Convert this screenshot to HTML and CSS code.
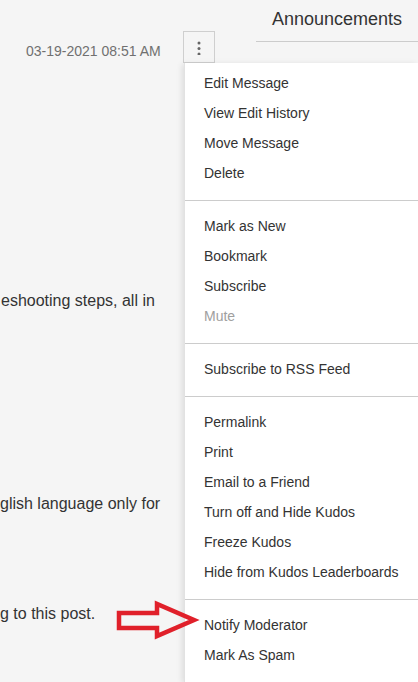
FILE: index.html
```html
<!DOCTYPE html>
<html lang="en">
<head>
<meta charset="utf-8">
<title>Message options</title>
<link rel="stylesheet" href="styles.css">
</head>
<body>
<div class="page">
  <div class="top">
    <div class="meta">
      <span class="stamp">03-19-2021 08:51 AM</span>
      <button class="kebab" aria-label="Options">
        <svg width="4" height="14" viewBox="0 0 4 14"><circle cx="2" cy="2" r="1.5" fill="#666"/><circle cx="2" cy="7.5" r="1.5" fill="#666"/><circle cx="2" cy="13" r="1.5" fill="#666"/></svg>
      </button>
    </div>
    <div class="title">Announcements</div>
  </div>
  <div class="main">
    <div class="body-text">
      <p class="p1">eshooting steps, all in</p>
      <p class="p2">glish language only for</p>
      <p class="p3">g to this post.</p>
    </div>
    <div class="menu">
      <ul class="group first">
        <li>Edit Message</li>
        <li>View Edit History</li>
        <li>Move Message</li>
        <li>Delete</li>
      </ul>
      <ul class="group">
        <li>Mark as New</li>
        <li>Bookmark</li>
        <li>Subscribe</li>
        <li class="disabled">Mute</li>
      </ul>
      <ul class="group">
        <li>Subscribe to RSS Feed</li>
      </ul>
      <ul class="group">
        <li>Permalink</li>
        <li>Print</li>
        <li>Email to a Friend</li>
        <li>Turn off and Hide Kudos</li>
        <li>Freeze Kudos</li>
        <li>Hide from Kudos Leaderboards</li>
      </ul>
      <ul class="group last">
        <li>Notify Moderator</li>
        <li>Mark As Spam</li>
      </ul>
    </div>
  </div>
  <svg class="arrow" width="86" height="50" viewBox="0 0 86 50">
    <polygon points="4,15 42,15 42,6 79,22 42,38 42,30 4,30" fill="none" stroke="#e0202a" stroke-width="4.5" stroke-linejoin="miter"/>
  </svg>
</div>
</body>
</html>
```

FILE: styles.css
```css
* { box-sizing: border-box; }
html, body { margin: 0; padding: 0; }
body {
  background: #f5f5f5;
  font-family: "Liberation Sans", Arial, sans-serif;
  color: #333;
}
.page {
  position: relative;
  width: 418px;
  height: 682px;
  overflow: hidden;
}
.top {
  display: flex;
  align-items: flex-start;
  height: 63px;
}
.meta {
  width: 256px;
  height: 63px;
  padding: 31px 41px 0 26px;
  display: flex;
  justify-content: space-between;
  align-items: flex-start;
}
.stamp {
  font-size: 14px;
  line-height: 16px;
  color: #707070;
  margin-top: 12px;
  white-space: nowrap;
}
.kebab {
  width: 32px;
  height: 32px;
  margin: 0;
  padding: 0;
  border: 1px solid #cfcfcf;
  background: #f5f5f5;
  display: flex;
  align-items: center;
  justify-content: center;
}
.kebab svg { display: block; margin-top: 1px; }
.title {
  flex: 1;
  height: 42px;
  padding: 9px 0 0 16px;
  font-size: 18px;
  line-height: 21px;
  color: #333;
  border-bottom: 1px solid #cccccc;
}
.main {
  display: flex;
  align-items: stretch;
  height: 619px;
}
.body-text {
  width: 184px;
  font-size: 16px;
  line-height: 20px;
  color: #333;
  white-space: nowrap;
}
.body-text p { margin: 0; }
.p1 { margin-top: 228px !important; padding-left: 1px; }
.p2 { margin-top: 183px !important; }
.p3 { margin-top: 90px !important; }
.menu {
  flex: 1;
  background: #fff;
  border-left: 1px solid #e2e2e2;
  box-shadow: -2px 1px 6px rgba(0, 0, 0, 0.10);
}
.group {
  list-style: none;
  margin: 0;
  padding: 10px 0 12px;
  border-top: 1px solid #cccccc;
}
.group.first {
  border-top: none;
  padding-top: 5px;
}
.group li {
  height: 30px;
  line-height: 30px;
  padding-left: 19px;
  font-size: 14px;
  color: #333;
  white-space: nowrap;
}
.group li.disabled { color: #a0a0a0; }
.arrow {
  position: absolute;
  left: 115px;
  top: 598px;
}
```
